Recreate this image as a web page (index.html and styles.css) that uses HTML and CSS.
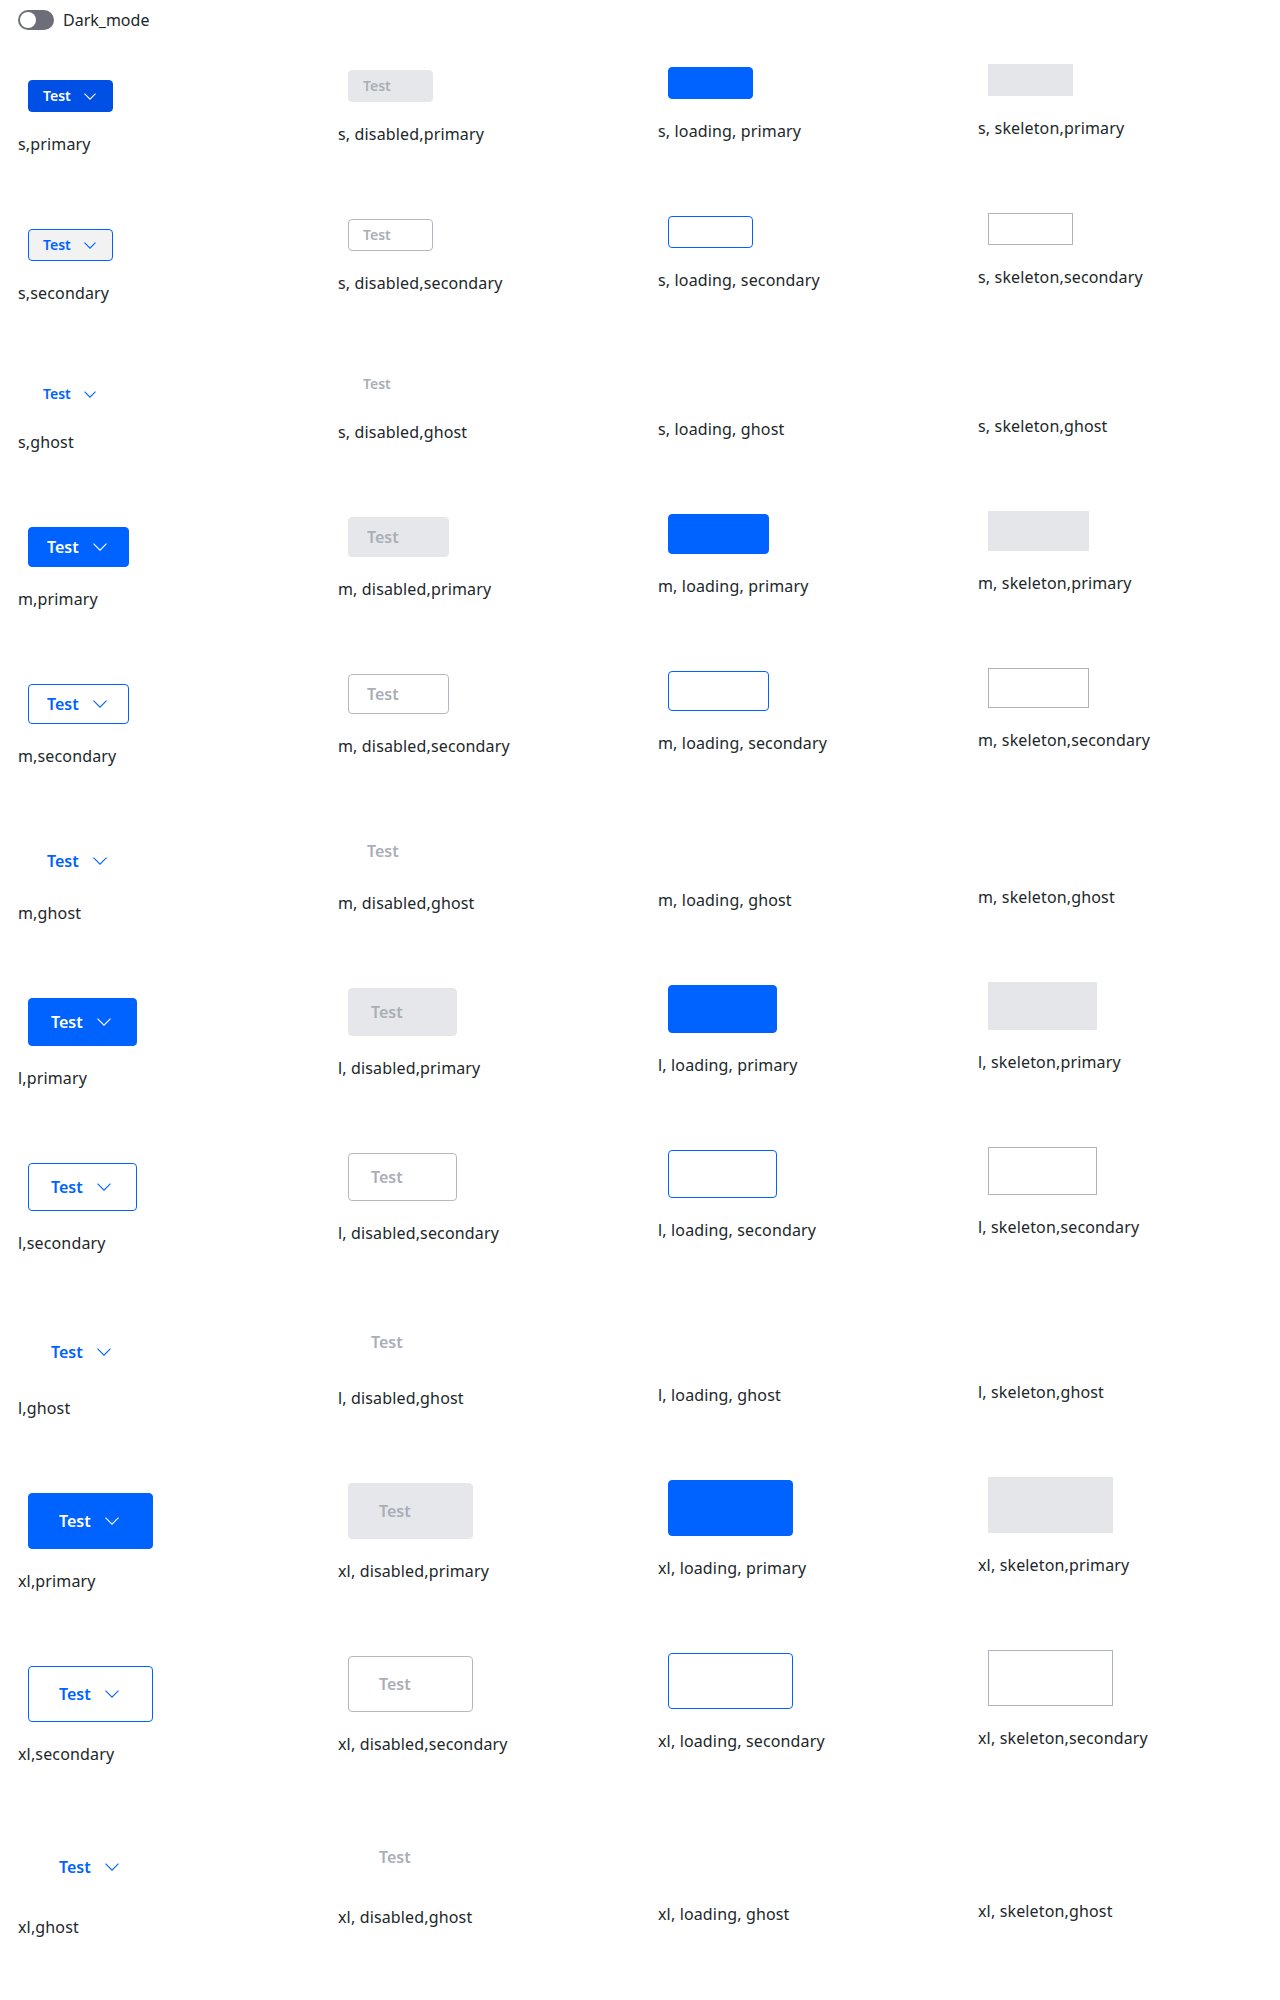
FILE: index.html
```html
<!DOCTYPE html>
<html lang="en">
<head>
<meta charset="utf-8">
<title>Buttons</title>
<link rel="stylesheet" href="styles.css">
</head>
<body>
<div class="topbar">
  <span class="toggle"><span class="knob"></span></span>
  <span class="toggle-label">Dark_mode</span>
</div>

<div class="grid">
  <!-- s primary -->
  <div class="cell c1"><button class="btn s primary focus"><span>Test</span><svg class="chev" width="12" height="7" viewBox="0 0 12 7"><polyline points="0.5,0.6 6,6.1 11.5,0.6"/></svg></button><p class="label">s,primary</p></div>
  <div class="cell c2"><button class="btn s dis-primary" disabled><span>Test</span></button><p class="label">s, disabled,primary</p></div>
  <div class="cell c3"><div class="btn s load-primary"></div><p class="label">s, loading, primary</p></div>
  <div class="cell c4"><div class="btn s skel-primary"></div><p class="label">s, skeleton,primary</p></div>

  <!-- s secondary -->
  <div class="cell c1"><button class="btn s secondary hover"><span>Test</span><svg class="chev" width="12" height="7" viewBox="0 0 12 7"><polyline points="0.5,0.6 6,6.1 11.5,0.6"/></svg></button><p class="label">s,secondary</p></div>
  <div class="cell c2"><button class="btn s dis-secondary" disabled><span>Test</span></button><p class="label">s, disabled,secondary</p></div>
  <div class="cell c3"><div class="btn s load-secondary"></div><p class="label">s, loading, secondary</p></div>
  <div class="cell c4"><div class="btn s skel-secondary"></div><p class="label">s, skeleton,secondary</p></div>

  <!-- s ghost -->
  <div class="cell c1"><button class="btn s ghost"><span>Test</span><svg class="chev" width="12" height="7" viewBox="0 0 12 7"><polyline points="0.5,0.6 6,6.1 11.5,0.6"/></svg></button><p class="label">s,ghost</p></div>
  <div class="cell c2"><button class="btn s dis-ghost" disabled><span>Test</span></button><p class="label">s, disabled,ghost</p></div>
  <div class="cell c3"><div class="btn s load-ghost"></div><p class="label">s, loading, ghost</p></div>
  <div class="cell c4"><div class="btn s skel-ghost"></div><p class="label">s, skeleton,ghost</p></div>

  <!-- m primary -->
  <div class="cell c1"><button class="btn m primary"><span>Test</span><svg class="chev" width="14" height="8" viewBox="0 0 14 8"><polyline points="0.5,0.6 7,7.1 13.5,0.6"/></svg></button><p class="label">m,primary</p></div>
  <div class="cell c2"><button class="btn m dis-primary" disabled><span>Test</span></button><p class="label">m, disabled,primary</p></div>
  <div class="cell c3"><div class="btn m load-primary"></div><p class="label">m, loading, primary</p></div>
  <div class="cell c4"><div class="btn m skel-primary"></div><p class="label">m, skeleton,primary</p></div>

  <!-- m secondary -->
  <div class="cell c1"><button class="btn m secondary"><span>Test</span><svg class="chev" width="14" height="8" viewBox="0 0 14 8"><polyline points="0.5,0.6 7,7.1 13.5,0.6"/></svg></button><p class="label">m,secondary</p></div>
  <div class="cell c2"><button class="btn m dis-secondary" disabled><span>Test</span></button><p class="label">m, disabled,secondary</p></div>
  <div class="cell c3"><div class="btn m load-secondary"></div><p class="label">m, loading, secondary</p></div>
  <div class="cell c4"><div class="btn m skel-secondary"></div><p class="label">m, skeleton,secondary</p></div>

  <!-- m ghost -->
  <div class="cell c1"><button class="btn m ghost"><span>Test</span><svg class="chev" width="14" height="8" viewBox="0 0 14 8"><polyline points="0.5,0.6 7,7.1 13.5,0.6"/></svg></button><p class="label">m,ghost</p></div>
  <div class="cell c2"><button class="btn m dis-ghost" disabled><span>Test</span></button><p class="label">m, disabled,ghost</p></div>
  <div class="cell c3"><div class="btn m load-ghost"></div><p class="label">m, loading, ghost</p></div>
  <div class="cell c4"><div class="btn m skel-ghost"></div><p class="label">m, skeleton,ghost</p></div>

  <!-- l primary -->
  <div class="cell c1"><button class="btn l primary"><span>Test</span><svg class="chev" width="14" height="8" viewBox="0 0 14 8"><polyline points="0.5,0.6 7,7.1 13.5,0.6"/></svg></button><p class="label">l,primary</p></div>
  <div class="cell c2"><button class="btn l dis-primary" disabled><span>Test</span></button><p class="label">l, disabled,primary</p></div>
  <div class="cell c3"><div class="btn l load-primary"></div><p class="label">l, loading, primary</p></div>
  <div class="cell c4"><div class="btn l skel-primary"></div><p class="label">l, skeleton,primary</p></div>

  <!-- l secondary -->
  <div class="cell c1"><button class="btn l secondary"><span>Test</span><svg class="chev" width="14" height="8" viewBox="0 0 14 8"><polyline points="0.5,0.6 7,7.1 13.5,0.6"/></svg></button><p class="label">l,secondary</p></div>
  <div class="cell c2"><button class="btn l dis-secondary" disabled><span>Test</span></button><p class="label">l, disabled,secondary</p></div>
  <div class="cell c3"><div class="btn l load-secondary"></div><p class="label">l, loading, secondary</p></div>
  <div class="cell c4"><div class="btn l skel-secondary"></div><p class="label">l, skeleton,secondary</p></div>

  <!-- l ghost -->
  <div class="cell c1"><button class="btn l ghost"><span>Test</span><svg class="chev" width="14" height="8" viewBox="0 0 14 8"><polyline points="0.5,0.6 7,7.1 13.5,0.6"/></svg></button><p class="label">l,ghost</p></div>
  <div class="cell c2"><button class="btn l dis-ghost" disabled><span>Test</span></button><p class="label">l, disabled,ghost</p></div>
  <div class="cell c3"><div class="btn l load-ghost"></div><p class="label">l, loading, ghost</p></div>
  <div class="cell c4"><div class="btn l skel-ghost"></div><p class="label">l, skeleton,ghost</p></div>

  <!-- xl primary -->
  <div class="cell c1"><button class="btn xl primary"><span>Test</span><svg class="chev" width="14" height="8" viewBox="0 0 14 8"><polyline points="0.5,0.6 7,7.1 13.5,0.6"/></svg></button><p class="label">xl,primary</p></div>
  <div class="cell c2"><button class="btn xl dis-primary" disabled><span>Test</span></button><p class="label">xl, disabled,primary</p></div>
  <div class="cell c3"><div class="btn xl load-primary"></div><p class="label">xl, loading, primary</p></div>
  <div class="cell c4"><div class="btn xl skel-primary"></div><p class="label">xl, skeleton,primary</p></div>

  <!-- xl secondary -->
  <div class="cell c1"><button class="btn xl secondary"><span>Test</span><svg class="chev" width="14" height="8" viewBox="0 0 14 8"><polyline points="0.5,0.6 7,7.1 13.5,0.6"/></svg></button><p class="label">xl,secondary</p></div>
  <div class="cell c2"><button class="btn xl dis-secondary" disabled><span>Test</span></button><p class="label">xl, disabled,secondary</p></div>
  <div class="cell c3"><div class="btn xl load-secondary"></div><p class="label">xl, loading, secondary</p></div>
  <div class="cell c4"><div class="btn xl skel-secondary"></div><p class="label">xl, skeleton,secondary</p></div>

  <!-- xl ghost -->
  <div class="cell c1"><button class="btn xl ghost"><span>Test</span><svg class="chev" width="14" height="8" viewBox="0 0 14 8"><polyline points="0.5,0.6 7,7.1 13.5,0.6"/></svg></button><p class="label">xl,ghost</p></div>
  <div class="cell c2"><button class="btn xl dis-ghost" disabled><span>Test</span></button><p class="label">xl, disabled,ghost</p></div>
  <div class="cell c3"><div class="btn xl load-ghost"></div><p class="label">xl, loading, ghost</p></div>
  <div class="cell c4"><div class="btn xl skel-ghost"></div><p class="label">xl, skeleton,ghost</p></div>
</div>
</body>
</html>
```

FILE: styles.css
```css
html, body {
  background: #ffffff;
}
body {
  margin: 8px;
  font-family: "Noto Sans", "Open Sans", sans-serif;
  color: #21272a;
}

.topbar {
  display: flex;
  align-items: center;
  gap: 9px;
  height: 20px;
  padding: 2px 10px 0;
}
.toggle {
  position: relative;
  width: 36px;
  height: 20px;
  border-radius: 10px;
  background: #6c6f77;
  flex: none;
}
.knob {
  position: absolute;
  left: 2px;
  top: 2px;
  width: 16px;
  height: 16px;
  border-radius: 50%;
  background: #ffffff;
}
.toggle-label {
  font-size: 16px;
  line-height: 22px;
  color: #21272a;
}

.grid {
  display: grid;
  grid-template-columns: 320px 320px 320px 1fr;
  margin-top: 24px;
  align-items: start;
}
.cell {
  padding-left: 10px;
}
.c1 { padding-top: 26px; padding-bottom: 48px; }
.c2 { padding-top: 16px; padding-bottom: 58px; }
.c3 { padding-top: 13px; padding-bottom: 61px; }
.c4 { padding-top: 10px; padding-bottom: 64px; }

.label {
  margin: 21px 0 0;
  font-size: 16px;
  line-height: 22px;
  letter-spacing: 0.15px;
  color: #21272a;
  white-space: nowrap;
}

.btn {
  box-sizing: border-box;
  display: flex;
  align-items: center;
  margin: 0 0 0 10px;
  padding: 0;
  border: 1px solid transparent;
  border-radius: 4px;
  background: transparent;
  font-family: "Noto Sans", "Open Sans", sans-serif;
  font-weight: 600;
  line-height: 1;
  -webkit-appearance: none;
  appearance: none;
}
.chev {
  flex: none;
  fill: none;
  stroke: currentColor;
  stroke-width: 1.1;
}

.s  { width: 85px;  height: 32px; padding-left: 14px; gap: 13px; font-size: 14px; }
.m  { width: 101px; height: 40px; padding-left: 18px; gap: 14px; font-size: 16px; }
.l  { width: 109px; height: 48px; padding-left: 22px; gap: 14px; font-size: 16px; }
.xl { width: 125px; height: 56px; padding-left: 30px; gap: 14px; font-size: 16px; }

.primary {
  background: #0062ff;
  border-color: #0062ff;
  color: #ffffff;
}
.primary.focus {
  background: #0050e6;
  border-color: #0050e6;
}
.secondary {
  background: #ffffff;
  border-color: #0062ff;
  color: #0062ff;
}
.secondary.hover {
  background: #f2f2f2;
}
.ghost {
  color: #0062ff;
}

.dis-primary {
  background: #e6e7ea;
  border-color: #e6e7ea;
  color: #a9aeb7;
}
.dis-secondary {
  background: #ffffff;
  border-color: #b4b8c0;
  color: #a9aeb7;
}
.dis-ghost {
  color: #a9aeb7;
}

.load-primary {
  background: #0062ff;
  border-color: #0062ff;
}
.load-secondary {
  background: #ffffff;
  border-color: #0062ff;
}

.skel-primary {
  background: #e5e6e9;
  border-color: #e5e6e9;
  border-radius: 0;
}
.skel-secondary {
  background: #ffffff;
  border-color: #aeb2ba;
  border-radius: 0;
}
.skel-ghost {
  border-radius: 0;
}
```
